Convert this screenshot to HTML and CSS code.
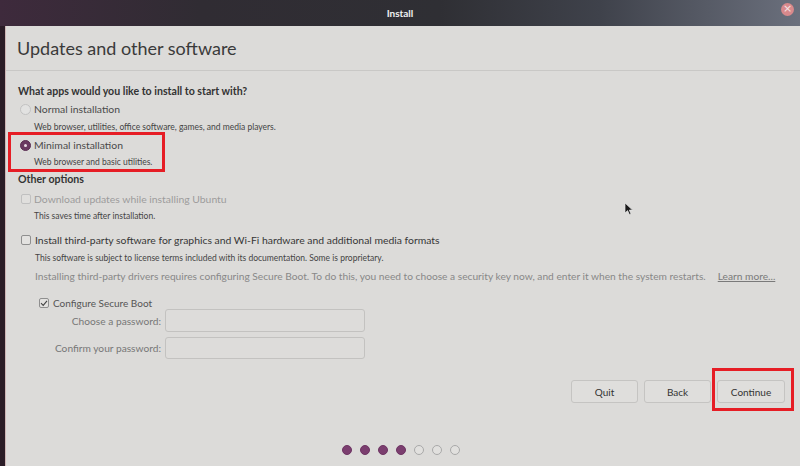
FILE: index.html
```html
<!DOCTYPE html>
<html>
<head>
<meta charset="utf-8">
<link rel="stylesheet" href="styles.css">
</head>
<body>
<div class="screen">
  <header class="titlebar">
    <span></span>
    <span class="title">Install</span>
    <span class="close">×</span>
  </header>
  <main class="content">
    <div class="header"><h1>Updates and other software</h1></div>

    <div class="row r-q bold">What apps would you like to install to start with?</div>
    <div class="row r-opt"><span class="radio"></span><span class="lbl">Normal installation</span></div>
    <div class="row r-desc desc">Web browser, utilities, office software, games, and media players.</div>
    <div class="row r-opt2"><span class="radio on"></span><span class="lbl">Minimal installation</span></div>
    <div class="row r-desc desc">Web browser and basic utilities.</div>
    <div class="row r-other bold">Other options</div>
    <div class="row r-dl"><span class="check dis"></span><span class="lbl dim">Download updates while installing Ubuntu</span></div>
    <div class="row r-desc2 desc">This saves time after installation.</div>
    <div class="row r-tp"><span class="check"></span><span class="lbl dark">Install third-party software for graphics and Wi-Fi hardware and additional media formats</span></div>
    <div class="row r-desc desc ind">This software is subject to license terms included with its documentation. Some is proprietary.</div>
    <div class="row r-sb ind"><span class="note">Installing third-party drivers requires configuring Secure Boot. To do this, you need to choose a security key now, and enter it when the system restarts.</span><span class="link">Learn more...</span></div>
    <div class="row r-cfg"><span class="check on"><svg viewBox="0 0 10 10" width="10" height="10"><path d="M2 5.2 L4.2 7.4 L8 2.8" fill="none" stroke="#444" stroke-width="1.1"/></svg></span><span class="lbl">Configure Secure Boot</span></div>
    <div class="pw">
      <label class="pwl">Choose a password:</label><span class="input i1"></span>
      <label class="pwl">Confirm your password:</label><span class="input i2"></span>
    </div>
    <div class="buttons">
      <button class="btn b-quit">Quit</button>
      <button class="btn b-back">Back</button>
      <button class="btn b-cont">Continue</button>
    </div>
    <div class="dots">
      <span class="dot on"></span><span class="dot on"></span><span class="dot on"></span><span class="dot on"></span><span class="dot"></span><span class="dot"></span><span class="dot"></span>
    </div>
  </main>
  <div class="mark mark-min"></div>
  <div class="mark mark-cont"></div>
  <svg class="cursor" viewBox="0 0 10 14" width="10" height="14"><path d="M1 1 L1 11 L3.6 8.6 L5.4 12.6 L7 11.9 L5.3 8.1 L8.6 8.1 Z" fill="#1a1a1a" stroke="#e8e8e8" stroke-width="0.7"/></svg>
</div>
</body>
</html>
```

FILE: styles.css
```css
* { box-sizing: border-box; }
html, body { margin: 0; padding: 0; }
body {
  width: 800px;
  height: 466px;
  overflow: hidden;
  background: #2a1c26;
  font-family: Lato, "Open Sans", "Liberation Sans", sans-serif;
}
.screen {
  position: relative;
  width: 800px;
  height: 466px;
  display: flex;
  flex-direction: column;
}
.titlebar {
  height: 26px;
  flex: none;
  display: grid;
  grid-template-columns: 1fr auto 1fr;
  align-items: center;
  background: linear-gradient(90deg, #3e2a3c 0%, #302c33 25%, #2f2f34 55%, #3f424b 75%, #6b707d 100%);
}
.title {
  color: #f1f1f1;
  font-weight: 700;
  font-size: 10px;
  margin-top: -1px;
}
.close {
  justify-self: end;
  margin-right: 6px;
  margin-top: -8px;
  width: 13px;
  height: 13px;
  border-radius: 50%;
  background: #d8898c;
  color: #f4e4e4;
  font-size: 11px;
  line-height: 12px;
  text-align: center;
  font-family: "DejaVu Sans", sans-serif;
}
.content {
  flex: 1;
  margin-left: 5px;
  border-left: 1px solid #cdb4b4;
  background: #dcdbd9;
  padding: 0 15px 0 11px;
  display: flex;
  flex-direction: column;
  color: #3f3f3f;
}
.header {
  height: 45px;
  margin: 0 -15px 0 -11px;
  padding-left: 11px;
  display: flex;
  align-items: center;
  border-bottom: 1px solid #c9c8c6;
}
h1 {
  margin: 0;
  font-weight: 400;
  font-size: 18px;
  color: #3a3a3a;
}
.row {
  display: flex;
  align-items: center;
  white-space: nowrap;
  flex: none;
}
.bold { font-weight: 700; font-size: 10.6px; color: #333; padding-left: 1px; }
.r-q { height: 18px; margin-top: 11px; }
.r-opt { height: 18px; }
.r-opt2 { height: 16px; margin-top: 1px; }
.r-desc { height: 18px; }
.r-other { height: 16px; }
.r-dl { height: 20px; margin-top: 2px; }
.r-desc2 { height: 14px; }
.r-tp { height: 18px; margin-top: 8px; }
.r-sb { height: 18px; }
.r-cfg { height: 12px; margin-top: 12px; padding-left: 18px; }
.desc { font-size: 8.5px; color: #444; padding-left: 17px; }
.ind { padding-left: 18px; }
.lbl { font-size: 10.4px; color: #4a4a4a; margin-left: 3px; }
.lbl.dim { color: #9c9c9c; }
.lbl.dark { color: #363636; margin-left: 4px; }
.r-cfg .lbl { color: #555; margin-left: 4px; font-size: 10px; }
.note { font-size: 10.2px; color: #888; }
.link { font-size: 10.2px; color: #7a7a7a; text-decoration: underline; margin-left: 12px; }
.radio {
  width: 11px;
  height: 11px;
  margin-left: 3px;
  border-radius: 50%;
  border: 1px solid #c2c2c2;
  background: #e2e2e1;
  flex: none;
  display: flex;
  align-items: center;
  justify-content: center;
}
.radio.on {
  background: #6a3a61;
  border-color: #5a2d52;
}
.radio.on::after {
  content: "";
  width: 3px;
  height: 3px;
  border-radius: 50%;
  background: #e9dde5;
}
.check {
  width: 10px;
  height: 10px;
  margin-left: 4px;
  border: 1px solid #8f8f8f;
  border-radius: 2px;
  background: #e3e2e0;
  flex: none;
  display: flex;
}
.check svg { margin: -1px; }
.check.dis { border-color: #c0c0c0; background: #e0dfdd; }
.pw {
  display: grid;
  grid-template-columns: 144px 200px;
  column-gap: 4px;
  row-gap: 5px;
  align-items: center;
}
.pwl {
  text-align: right;
  font-size: 10.2px;
  color: #777;
  white-space: nowrap;
}
.input {
  display: block;
  border: 1px solid #c3c2c0;
  border-radius: 3px;
  background: #dddcda;
}
.i1 { height: 23px; }
.i2 { height: 22px; }
.buttons {
  display: flex;
  justify-content: flex-end;
  gap: 6px;
  margin-top: 21px;
  flex: none;
}
.btn {
  height: 23px;
  border: 1px solid #c5c4c2;
  border-radius: 3px;
  background: #dfdedc;
  color: #333;
  font-family: inherit;
  font-size: 10px;
  padding: 0;
}
.b-quit { width: 67px; }
.b-back { width: 67px; }
.b-cont { width: 68px; }
.dots {
  display: flex;
  justify-content: center;
  gap: 8px;
  margin-top: 42px;
  flex: none;
}
.dot {
  width: 10px;
  height: 10px;
  border-radius: 50%;
  border: 1px solid #a9a9a9;
  background: #e1e0de;
}
.dot.on { background: #7b3e6f; border-color: #6e3463; }
.mark {
  position: absolute;
  border: 3px solid #e61d25;
}
.mark-min { left: 8px; top: 132px; width: 157px; height: 40px; }
.mark-cont { left: 712px; top: 368px; width: 82px; height: 43px; }
.cursor { position: absolute; left: 624px; top: 202px; }
```
